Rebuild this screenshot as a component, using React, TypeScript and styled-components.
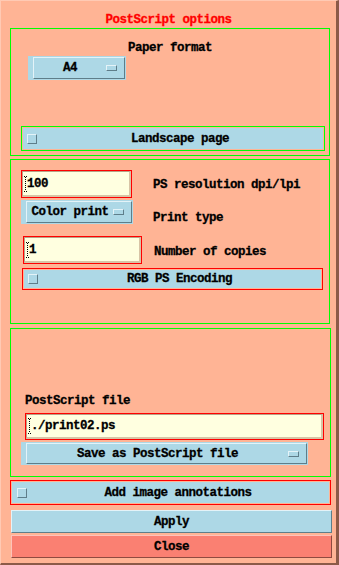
import React from "react";
import styled, { createGlobalStyle } from "styled-components";

const GlobalStyle = createGlobalStyle`
  html, body {
    margin: 0;
    padding: 0;
    background: #ffb495;
  }
`;

const blue = "#add8e6";
const blueLight = "#e4f3f8";
const blueDark = "#5e7e8a";

const Window = styled.div`
  width: 339px;
  height: 565px;
  box-sizing: border-box;
  background: #ffb495;
  border-top: 1px solid #ffcab4;
  border-left: 1px solid #ffcab4;
  border-right: 3px solid #8c5a48;
  border-bottom: 2px solid #8c5a48;
  display: flex;
  flex-direction: column;
  align-items: flex-start;
  font: bold 12.5px/14px "Liberation Mono", "DejaVu Sans Mono", monospace;
  letter-spacing: -0.5px;
  -webkit-text-stroke: 0.3px currentColor;
  color: #000;
`;

const Title = styled.div`
  align-self: stretch;
  height: 27px;
  box-sizing: border-box;
  padding-top: 12px;
  text-align: center;
  color: #ff0000;
`;

const Frame = styled.div<{ $w: number; $h: number; $mt: number }>`
  width: ${(p) => p.$w}px;
  height: ${(p) => p.$h}px;
  margin: ${(p) => p.$mt}px 0 0 9px;
  box-sizing: border-box;
  border: 1px solid #00ff00;
  display: flex;
  flex-direction: column;
  align-items: flex-start;
`;

const Label = styled.div<{ $mt?: number; $ml?: number; $center?: boolean }>`
  margin-top: ${(p) => p.$mt ?? 0}px;
  margin-left: ${(p) => p.$ml ?? 0}px;
  align-self: ${(p) => (p.$center ? "stretch" : "auto")};
  text-align: ${(p) => (p.$center ? "center" : "left")};
  white-space: pre;
`;

const Row = styled.div<{ $mt: number; $h: number }>`
  display: grid;
  grid-template-columns: 142px auto;
  align-items: start;
  height: ${(p) => p.$h}px;
  margin-top: ${(p) => p.$mt}px;
  align-self: stretch;
`;

const Place = styled.div<{ $mt?: number; $ml?: number }>`
  margin-top: ${(p) => p.$mt ?? 0}px;
  margin-left: ${(p) => p.$ml ?? 0}px;
`;

/* option menu: empty label strip + cascade button */
const Menu = styled.div<{ $w: number; $h: number }>`
  width: ${(p) => p.$w}px;
  height: ${(p) => p.$h}px;
  box-sizing: border-box;
  padding: 1px 1px 1px 5px;
  background: ${blue};
  display: flex;
`;

const MenuButton = styled.div`
  flex: 1;
  display: flex;
  align-items: center;
  padding-right: 7px;
  border-top: 1px solid ${blueLight};
  border-left: 1px solid ${blueLight};
  border-right: 1px solid ${blueDark};
  border-bottom: 1px solid ${blueDark};
`;

const MenuText = styled.span`
  flex: 1;
  text-align: center;
  white-space: pre;
`;

const Indicator = styled.span`
  width: 11px;
  height: 6px;
  box-sizing: border-box;
  border-top: 1px solid ${blueLight};
  border-left: 1px solid ${blueLight};
  border-right: 1px solid ${blueDark};
  border-bottom: 1px solid ${blueDark};
`;

const ToggleFrame = styled.div<{ $w: number; $h: number; $color: string }>`
  width: ${(p) => p.$w}px;
  height: ${(p) => p.$h}px;
  box-sizing: border-box;
  border: 1px solid ${(p) => p.$color};
  padding: 1px;
`;

const ToggleBody = styled.div<{ $pl: number }>`
  height: 100%;
  background: ${blue};
  display: flex;
  align-items: center;
  padding-left: ${(p) => p.$pl}px;
`;

const Check = styled.span`
  width: 10px;
  height: 10px;
  box-sizing: border-box;
  border-top: 1px solid ${blueLight};
  border-left: 1px solid ${blueLight};
  border-right: 1px solid ${blueDark};
  border-bottom: 1px solid ${blueDark};
`;

const ToggleText = styled.span`
  flex: 1;
  text-align: center;
  white-space: pre;
`;

const InputFrame = styled.div<{ $w: number; $h: number }>`
  width: ${(p) => p.$w}px;
  height: ${(p) => p.$h}px;
  box-sizing: border-box;
  border: 1px solid #ff0000;
  display: flex;
`;

const Field = styled.div`
  flex: 1;
  display: flex;
  align-items: center;
  padding-left: 1px;
  background: #ffffe0;
  border-top: 1px solid #b9a286;
  border-left: 1px solid #b9a286;
  border-right: 2px solid #d8c4a6;
  border-bottom: 2px solid #d8c4a6;
  white-space: pre;
`;

const PushButton = styled.button<{ $danger?: boolean; $mt: number }>`
  width: 321px;
  height: 23px;
  margin: ${(p) => p.$mt}px 0 0 10px;
  padding: 0;
  box-sizing: border-box;
  font: inherit;
  letter-spacing: inherit;
  color: #000;
  background: ${(p) => (p.$danger ? "#fa8072" : blue)};
  border-style: solid;
  border-width: 1px;
  border-color: ${(p) =>
    p.$danger
      ? "#fdc3ba #8f4a40 #8f4a40 #fdc3ba"
      : `${blueLight} ${blueDark} ${blueDark} ${blueLight}`};
`;

const Caret = () => (
  <svg width="3" height="16" viewBox="0 0 3 16" style={{ flex: "none" }}>
    <path d="M0 0.5h3M0 15.5h3" stroke="#000" strokeWidth="1" strokeDasharray="1 1" />
    <path d="M1.5 1v14" stroke="#000" strokeWidth="1" strokeDasharray="1 1" />
  </svg>
);

const OptionMenu = ({ text, w, h }: { text: string; w: number; h: number }) => (
  <Menu $w={w} $h={h}>
    <MenuButton>
      <MenuText>{text}</MenuText>
      <Indicator />
    </MenuButton>
  </Menu>
);

const Toggle = ({
  text,
  w,
  h,
  color,
  pl = 4,
}: {
  text: string;
  w: number;
  h: number;
  color: string;
  pl?: number;
}) => (
  <ToggleFrame $w={w} $h={h} $color={color}>
    <ToggleBody $pl={pl}>
      <Check />
      <ToggleText>{text}</ToggleText>
    </ToggleBody>
  </ToggleFrame>
);

const TextInput = ({ value, w, h }: { value: string; w: number; h: number }) => (
  <InputFrame $w={w} $h={h}>
    <Field>
      <Caret />
      {value}
    </Field>
  </InputFrame>
);

export default function App() {
  return (
    <>
      <GlobalStyle />
      <Window>
        <Title>PostScript options</Title>

        <Frame $w={320} $h={128} $mt={0}>
          <Label $mt={12} $center>
            Paper format
          </Label>
          <Place $mt={1} $ml={17}>
            <OptionMenu text="A4" w={98} h={24} />
          </Place>
          <Place $mt={46} $ml={10}>
            <Toggle text="Landscape page" w={304} h={25} color="#00ff00" />
          </Place>
        </Frame>

        <Frame $w={320} $h={165} $mt={3}>
          <Row $mt={10} $h={28}>
            <Place $ml={10}>
              <TextInput value="100" w={111} h={28} />
            </Place>
            <Label $mt={8}>PS resolution dpi/lpi</Label>
          </Row>
          <Row $mt={2} $h={24}>
            <Place $ml={10}>
              <OptionMenu text="Color print" w={112} h={24} />
            </Place>
            <Label $mt={11}>Print type</Label>
          </Row>
          <Row $mt={12} $h={28}>
            <Place $ml={12}>
              <TextInput value="1" w={119} h={28} />
            </Place>
            <Label $mt={9} $ml={1}>
              Number of copies
            </Label>
          </Row>
          <Place $mt={4} $ml={11}>
            <Toggle text="RGB PS Encoding" w={301} h={22} color="#ff0000" />
          </Place>
        </Frame>

        <Frame $w={321} $h={149} $mt={4}>
          <Label $mt={65} $ml={14}>
            PostScript file
          </Label>
          <Place $mt={5} $ml={14}>
            <TextInput value="./print02.ps" w={299} h={27} />
          </Place>
          <Place $mt={2} $ml={10}>
            <OptionMenu text="Save as PostScript file" w={287} h={23} />
          </Place>
        </Frame>

        <Place $mt={3} $ml={9}>
          <Toggle text="Add image annotations" w={321} h={25} color="#ff0000" pl={5} />
        </Place>

        <PushButton $mt={5}>Apply</PushButton>
        <PushButton $mt={2} $danger>
          Close
        </PushButton>
      </Window>
    </>
  );
}
